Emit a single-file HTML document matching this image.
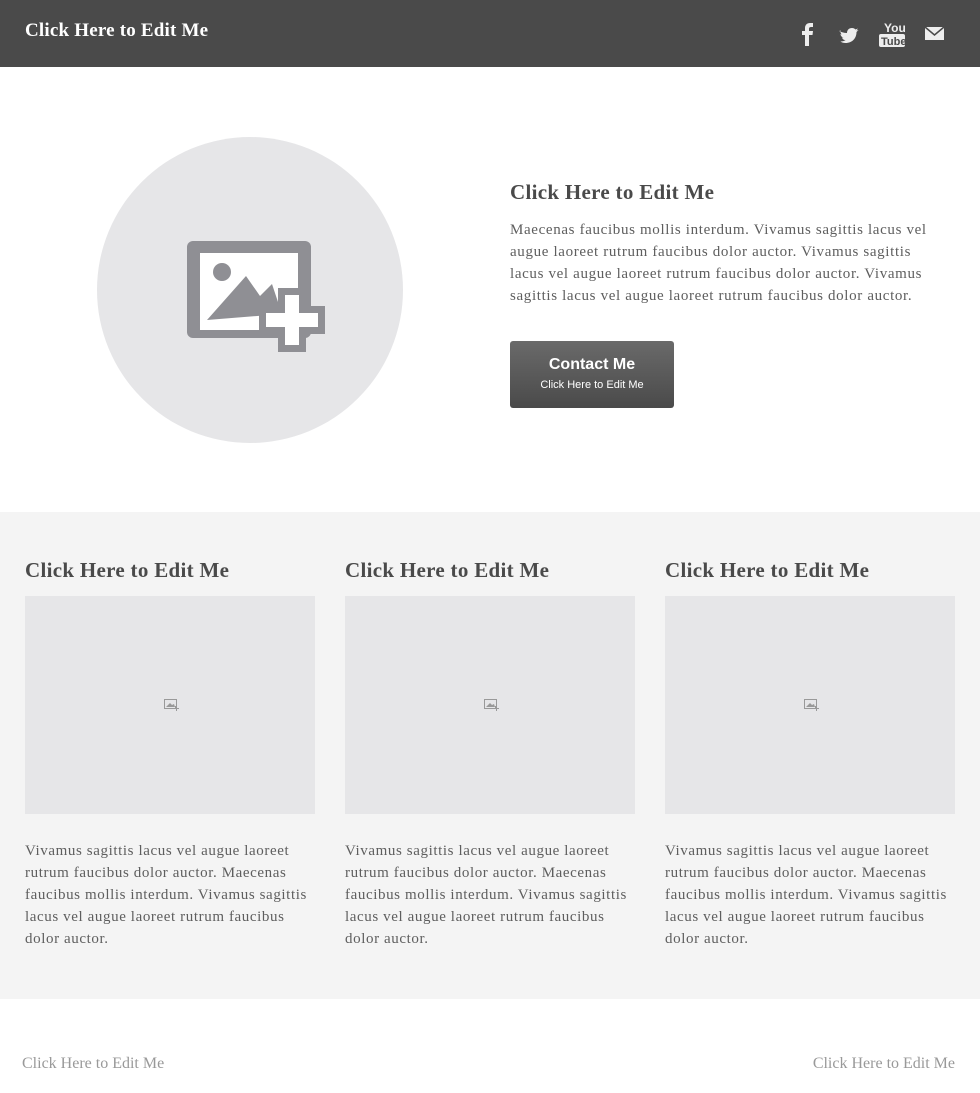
<!DOCTYPE html>
<html><head><meta charset="utf-8"><style>
*{margin:0;padding:0;box-sizing:border-box}
body{width:980px;height:1093px;background:#fff;font-family:"Liberation Serif",serif;color:#666;position:relative;overflow:hidden}
.abs{position:absolute}
.hdr{left:0;top:0;width:980px;height:67px;background:#4a4a4a}
.logo{left:25px;top:20px;color:#fff;font-weight:bold;font-size:19px;letter-spacing:.2px}
h2{font-size:21px;font-weight:bold;color:#4a4a4a;white-space:nowrap;letter-spacing:.3px}
p{font-size:15px;line-height:22px;color:#5e5e5e;white-space:nowrap;letter-spacing:.6px}
.band{left:0;top:512px;width:980px;height:487px;background:#f4f4f4}
.box{width:290px;height:218px;background:#e6e6e8}
.btn{left:510px;top:341px;width:164px;height:67px;border-radius:3px;background:linear-gradient(#6a6a6a,#4a4a4a);color:#fff;text-align:center;font-family:"Liberation Sans",sans-serif}
.foot{top:1055px;font-size:16px;color:#999}
</style></head><body>
<div class="abs hdr"></div>
<div class="abs logo">Click Here to Edit Me</div>
<svg class="abs" style="left:795px;top:18px" width="160" height="32" viewBox="0 0 160 32">
<path d="M10 28V17H7v-4h3v-3c0-3 2-5 5-5h3v4h-2c-1 0-2 .5-2 1.5V13h4l-.5 4H14v11z" fill="#eee"/>
<path d="M44 13c2 1 5 2 8 2 0-3 2-5 5-5 1.5 0 2.5.5 3.5 1.5l2.5-1-1.5 2 2-.5-2 2c0 6-4 11-11 11-2 0-4-.5-5-1.5 2 0 4-.5 5-1.5-2 0-3-1-3.5-2.5h1.5c-2-.5-3-2-3-3.5l1.5.5c-1.5-1-2-3-1-4z" fill="#eee"/>
<text x="89" y="14" font-family="Liberation Sans" font-size="12" font-weight="bold" fill="#eee">You</text>
<rect x="84" y="16" width="26" height="13" rx="2" fill="#eee"/>
<text x="86" y="27" font-family="Liberation Sans" font-size="11" font-weight="bold" fill="#4a4a4a">Tube</text>
<rect x="130" y="9" width="19" height="13" fill="#eee"/>
<path d="M130 9l9.5 8 9.5-8" stroke="#4a4a4a" stroke-width="1.5" fill="none"/>
</svg>
<div class="abs" style="left:97px;top:137px;width:306px;height:306px;border-radius:50%;background:#e6e6e8"></div>
<svg class="abs" style="left:186px;top:240px" width="140" height="115" viewBox="0 0 140 115">
<rect x="1" y="1" width="124" height="97" rx="6" fill="#8f8f94"/>
<rect x="14" y="13" width="98" height="77" fill="#fff"/>
<circle cx="36" cy="32" r="9" fill="#8f8f94"/>
<path d="M21 80L60 36l14 20 12-12 10 30z" fill="#8f8f94"/>
<path d="M92 48h28v18h19v28h-19v18H92V94H73V66h19z" fill="#8f8f94"/>
<path d="M99 55h14v18h19v14h-19v18H99V87H80V73h19z" fill="#fff"/>
</svg>
<h2 class="abs" style="left:510px;top:180px">Click Here to Edit Me</h2>
<p class="abs" style="left:510px;top:219px;letter-spacing:.65px">Maecenas faucibus mollis interdum. Vivamus sagittis lacus vel<br>augue laoreet rutrum faucibus dolor auctor. Vivamus sagittis<br>lacus vel augue laoreet rutrum faucibus dolor auctor. Vivamus<br>sagittis lacus vel augue laoreet rutrum faucibus dolor auctor.</p>
<div class="abs btn"><div style="font-size:16px;font-weight:bold;margin-top:15px">Contact Me</div><div style="font-size:11px;margin-top:5px">Click Here to Edit Me</div></div>
<div class="abs band"></div>
<h2 class="abs" style="left:25px;top:558px">Click Here to Edit Me</h2>
<h2 class="abs" style="left:345px;top:558px">Click Here to Edit Me</h2>
<h2 class="abs" style="left:665px;top:558px">Click Here to Edit Me</h2>
<div class="abs box" style="left:25px;top:596px"></div>
<div class="abs box" style="left:345px;top:596px"></div>
<div class="abs box" style="left:665px;top:596px"></div>
<svg class="abs" style="left:164px;top:699px" width="15" height="12" viewBox="0 0 15 12"><rect x=".5" y=".5" width="12" height="9" fill="none" stroke="#999"/><path d="M2 8l4-4 2 2 2-1 1 3z" fill="#999"/><path d="M11 7h2v2h2v1h-2v2h-1v-2h-2v-1h1z" fill="#999"/></svg>
<svg class="abs" style="left:484px;top:699px" width="15" height="12" viewBox="0 0 15 12"><rect x=".5" y=".5" width="12" height="9" fill="none" stroke="#999"/><path d="M2 8l4-4 2 2 2-1 1 3z" fill="#999"/><path d="M11 7h2v2h2v1h-2v2h-1v-2h-2v-1h1z" fill="#999"/></svg>
<svg class="abs" style="left:804px;top:699px" width="15" height="12" viewBox="0 0 15 12"><rect x=".5" y=".5" width="12" height="9" fill="none" stroke="#999"/><path d="M2 8l4-4 2 2 2-1 1 3z" fill="#999"/><path d="M11 7h2v2h2v1h-2v2h-1v-2h-2v-1h1z" fill="#999"/></svg>
<p class="abs" style="left:25px;top:840px">Vivamus sagittis lacus vel augue laoreet<br>rutrum faucibus dolor auctor. Maecenas<br>faucibus mollis interdum. Vivamus sagittis<br>lacus vel augue laoreet rutrum faucibus<br>dolor auctor.</p>
<p class="abs" style="left:345px;top:840px">Vivamus sagittis lacus vel augue laoreet<br>rutrum faucibus dolor auctor. Maecenas<br>faucibus mollis interdum. Vivamus sagittis<br>lacus vel augue laoreet rutrum faucibus<br>dolor auctor.</p>
<p class="abs" style="left:665px;top:840px">Vivamus sagittis lacus vel augue laoreet<br>rutrum faucibus dolor auctor. Maecenas<br>faucibus mollis interdum. Vivamus sagittis<br>lacus vel augue laoreet rutrum faucibus<br>dolor auctor.</p>
<div class="abs foot" style="left:22px">Click Here to Edit Me</div>
<div class="abs foot" style="right:25px">Click Here to Edit Me</div>
</body></html>
